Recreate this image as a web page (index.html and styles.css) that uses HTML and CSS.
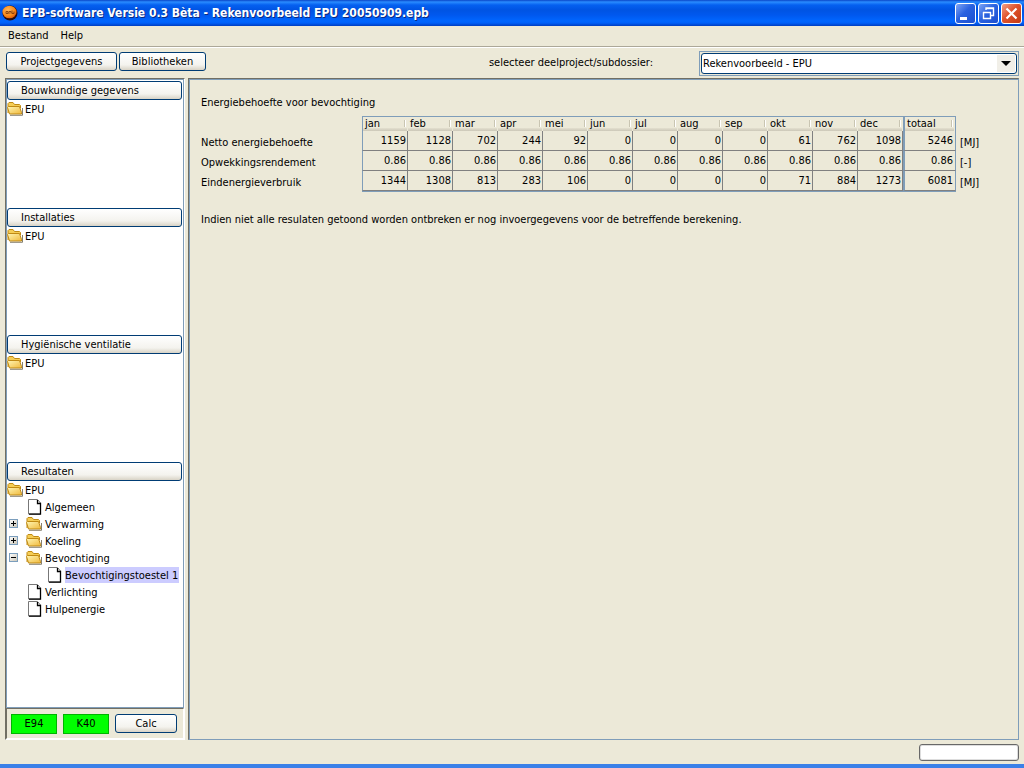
FILE: index.html
```html
<!DOCTYPE html>
<html lang="nl">
<head>
<meta charset="utf-8">
<title>EPB-software Versie 0.3 Bèta</title>
<link rel="stylesheet" href="styles.css">
</head>
<body>
<svg class="defs" aria-hidden="true">
  <defs>
    <linearGradient id="gold" x1="0" y1="0" x2="1" y2="1">
      <stop offset="0" stop-color="#fff6b4"/><stop offset="1" stop-color="#f0b93c"/>
    </linearGradient>
    <symbol id="folder" viewBox="0 0 16 14">
      <path d="M1 11V1.500L2 .5H6L7.500 2.500H12.500L13.500 3.500V6" fill="#f5cd55" stroke="#c08a14"/>
      <path d="M2.500 12L.5 5.500L1.500 4.500H12.500L14.500 10.500V12Z" fill="url(#gold)" stroke="#c08a14"/>
      <path d="M15.500 6V13.300H3" fill="none" stroke="#5e5640" stroke-opacity=".75"/>
    </symbol>
    <symbol id="page" viewBox="0 0 14 16">
      <path d="M.5 15V.5H9.500L12.500 4V15Z" fill="#fff" stroke="#777"/>
      <path d="M9.500 1V4.500H12.500V15.200H1" fill="none" stroke="#000" stroke-width="1.300"/>
    </symbol>
    <linearGradient id="boxfill" x1="0" y1="0" x2="1" y2="1">
      <stop offset="0" stop-color="#fff"/><stop offset="1" stop-color="#c9c4b5"/>
    </linearGradient>
    <symbol id="plus" viewBox="0 0 9 9">
      <rect x=".5" y=".5" width="8" height="8" fill="url(#boxfill)" stroke="#7b9ebd"/>
      <path d="M2 4.500H7M4.500 2V7" stroke="#000"/>
    </symbol>
    <symbol id="minus" viewBox="0 0 9 9">
      <rect x=".5" y=".5" width="8" height="8" fill="url(#boxfill)" stroke="#7b9ebd"/>
      <path d="M2 4.500H7" stroke="#000"/>
    </symbol>
  </defs>
</svg>

<header class="titlebar">
  <svg class="app-icon" viewBox="0 0 16 16" aria-hidden="true">
    <defs><radialGradient id="ball" cx=".4" cy=".35" r=".75"><stop offset="0" stop-color="#ffb65a"/><stop offset=".6" stop-color="#fa8a1a"/><stop offset="1" stop-color="#d84a00"/></radialGradient></defs>
    <circle cx="8" cy="8" r="7.500" fill="#2a0d10"/>
    <ellipse cx="7.500" cy="7" rx="7" ry="6.300" fill="url(#ball)"/>
    <path d="M4 6.500H6V8.500H4ZM7 9V6.500H9V8.500M10 5.500V8.500H12V6.500" fill="none" stroke="#7a3508" stroke-width=".8"/>
  </svg>
  <h1 class="title">EPB-software Versie 0.3 Bèta - Rekenvoorbeeld EPU 20050909.epb</h1>
  <button class="win" aria-label="Minimaliseren"><svg viewBox="0 0 19 19"><path d="M4 13H11V16H4Z" fill="#fff"/></svg></button>
  <button class="win" aria-label="Herstellen"><svg viewBox="0 0 19 19"><path d="M7 6V4H14.500V11.500H12M6.500 4.500H15" fill="none" stroke="#fff" stroke-width="1.400"/><path d="M4.500 8V14.500H11.500V8M4 8.500H12" fill="none" stroke="#fff" stroke-width="1.400"/></svg></button>
  <button class="win win-close" aria-label="Sluiten"><svg viewBox="0 0 19 19"><path d="M4.500 4.500L14.500 14.500M14.500 4.500L4.500 14.500" stroke="#fff" stroke-width="2.200"/></svg></button>
</header>

<nav class="menubar">
  <button class="menu">Bestand</button>
  <button class="menu">Help</button>
</nav>

<div class="toolbar">
  <button class="btn btn-project">Projectgegevens</button>
  <button class="btn btn-library">Bibliotheken</button>
  <label class="select-label" for="dossier">selecteer deelproject/subdossier:</label>
  <div class="select-frame">
    <select id="dossier" class="select"><option>Rekenvoorbeeld - EPU</option></select>
    <span class="select-arrow"><svg viewBox="0 0 10 5"><path d="M0 0H10L5 5Z"/></svg></span>
  </div>
</div>

<div class="workspace">
  <aside class="sidebar">
    <div class="sections">
      <section class="section">
        <button class="btn section-btn">Bouwkundige gegevens</button>
        <ul class="tree"><li class="node"><svg class="folder"><use href="#folder"/></svg><span class="name">EPU</span></li></ul>
      </section>
      <section class="section">
        <button class="btn section-btn">Installaties</button>
        <ul class="tree"><li class="node"><svg class="folder"><use href="#folder"/></svg><span class="name">EPU</span></li></ul>
      </section>
      <section class="section">
        <button class="btn section-btn">Hygiënische ventilatie</button>
        <ul class="tree"><li class="node"><svg class="folder"><use href="#folder"/></svg><span class="name">EPU</span></li></ul>
      </section>
      <section class="section section-last">
        <button class="btn section-btn">Resultaten</button>
        <ul class="tree">
          <li class="node"><svg class="folder"><use href="#folder"/></svg><span class="name">EPU</span></li>
          <li class="node level1"><span class="toggle"></span><svg class="page"><use href="#page"/></svg><span class="name">Algemeen</span></li>
          <li class="node level1"><span class="toggle"><svg class="box"><use href="#plus"/></svg></span><svg class="folder"><use href="#folder"/></svg><span class="name">Verwarming</span></li>
          <li class="node level1"><span class="toggle"><svg class="box"><use href="#plus"/></svg></span><svg class="folder"><use href="#folder"/></svg><span class="name">Koeling</span></li>
          <li class="node level1"><span class="toggle"><svg class="box"><use href="#minus"/></svg></span><svg class="folder"><use href="#folder"/></svg><span class="name">Bevochtiging</span></li>
          <li class="node level2"><span class="toggle"></span><svg class="page"><use href="#page"/></svg><span class="name selected">Bevochtigingstoestel 1</span></li>
          <li class="node level1"><span class="toggle"></span><svg class="page"><use href="#page"/></svg><span class="name">Verlichting</span></li>
          <li class="node level1"><span class="toggle"></span><svg class="page"><use href="#page"/></svg><span class="name">Hulpenergie</span></li>
        </ul>
      </section>
    </div>
    <div class="scores">
      <span class="score">E94</span>
      <span class="score">K40</span>
      <button class="btn calc">Calc</button>
    </div>
  </aside>

  <main class="content">
    <h2 class="heading">Energiebehoefte voor bevochtiging</h2>
    <table class="results">
      <thead>
        <tr><td class="label"></td><th class="m first"><span>jan</span></th><th class="m"><span>feb</span></th><th class="m"><span>mar</span></th><th class="m"><span>apr</span></th><th class="m"><span>mei</span></th><th class="m"><span>jun</span></th><th class="m"><span>jul</span></th><th class="m"><span>aug</span></th><th class="m"><span>sep</span></th><th class="m"><span>okt</span></th><th class="m"><span>nov</span></th><th class="m"><span>dec</span></th><th class="m total"><span>totaal</span></th><td class="unit"></td></tr>
      </thead>
      <tbody>
        <tr><th class="label">Netto energiebehoefte</th><td class="v first">1159</td><td class="v">1128</td><td class="v">702</td><td class="v">244</td><td class="v">92</td><td class="v">0</td><td class="v">0</td><td class="v">0</td><td class="v">0</td><td class="v">61</td><td class="v">762</td><td class="v">1098</td><td class="v total">5246</td><td class="unit">[MJ]</td></tr>
        <tr><th class="label">Opwekkingsrendement</th><td class="v first">0.86</td><td class="v">0.86</td><td class="v">0.86</td><td class="v">0.86</td><td class="v">0.86</td><td class="v">0.86</td><td class="v">0.86</td><td class="v">0.86</td><td class="v">0.86</td><td class="v">0.86</td><td class="v">0.86</td><td class="v">0.86</td><td class="v total">0.86</td><td class="unit">[-]</td></tr>
        <tr><th class="label">Eindenergieverbruik</th><td class="v first">1344</td><td class="v">1308</td><td class="v">813</td><td class="v">283</td><td class="v">106</td><td class="v">0</td><td class="v">0</td><td class="v">0</td><td class="v">0</td><td class="v">71</td><td class="v">884</td><td class="v">1273</td><td class="v total">6081</td><td class="unit">[MJ]</td></tr>
      </tbody>
    </table>
    <p class="note">Indien niet alle resulaten getoond worden ontbreken er nog invoergegevens voor de betreffende berekening.</p>
  </main>
</div>

<footer class="statusbar"><div class="progress"></div></footer>
</body>
</html>
```
FILE: styles.css
```css
* { box-sizing: border-box; }

body {
  margin: 0;
  min-height: 100vh;
  display: flex;
  flex-direction: column;
  background: #ece9d8;
  color: #000;
  font: 11px/14px "DejaVu Sans Condensed", "DejaVu Sans", sans-serif;
}

button, select {
  font: inherit;
  color: inherit;
  margin: 0;
  padding: 0;
}

svg { display: block; flex: none; }
.defs { position: absolute; width: 0; height: 0; }

.titlebar {
  height: 26px;
  display: flex;
  align-items: center;
  gap: 2px;
  padding: 0 2px;
  background: linear-gradient(#0a46c8 0, #2a8cff 2px, #0560f0 5px, #0054e3 10px, #0058ee 15px, #0066ff 21px, #0060f8 23px, #003dc0 26px);
}
.app-icon { width: 16px; height: 16px; }
.title {
  flex: 1;
  margin: 0;
  padding-left: 2px;
  font: bold 12px/16px "DejaVu Sans Condensed", "DejaVu Sans", sans-serif;
  color: #fff;
  text-shadow: 1px 1px 0 #0a2a80;
  white-space: nowrap;
}
.win {
  width: 21px;
  height: 21px;
  border: 1px solid #fff;
  border-radius: 3px;
  background: linear-gradient(135deg, #7fa5f5, #2a62e0 45%, #1c4fd0);
}
.win-close { background: linear-gradient(135deg, #f0a088, #e0532c 45%, #c23a14); }

.menubar {
  height: 21px;
  display: flex;
  align-items: center;
  gap: 12px;
  padding: 0 8px;
  border-bottom: 1px solid #aca899;
  box-shadow: 0 1px 0 #fff;
}
.menu { border: 0; background: none; }

.toolbar {
  height: 31px;
  display: flex;
  align-items: flex-start;
  gap: 2px;
  padding: 5px 5px 0 6px;
}
.btn {
  border: 1px solid #003c74;
  border-radius: 3px;
  padding-top: 1px;
  background: linear-gradient(#fff, #f4f3ee 70%, #d8d3c6);
}
.btn-project { width: 111px; height: 19px; }
.btn-library { width: 87px; height: 19px; }
.select-label { margin-left: auto; padding: 4px 44px 0 0; }
.select-frame {
  position: relative;
  width: 320px;
  height: 25px;
  margin-top: -1px;
  padding: 1px;
  border: 1px solid #7f9db9;
}
.select {
  appearance: none;
  width: 100%;
  height: 21px;
  padding-left: 1px;
  border: 1px solid #003c74;
  border-radius: 3px;
  background: #fff;
}
.select-arrow {
  position: absolute;
  top: 3px;
  right: 3px;
  width: 18px;
  height: 17px;
  display: grid;
  place-items: center;
  background: #f1efe8;
  pointer-events: none;
}
.select-arrow svg { width: 10px; height: 5px; }

.workspace {
  flex: 1;
  display: flex;
  gap: 3px;
  padding: 0 5px;
}
.sidebar {
  width: 180px;
  flex: none;
  display: flex;
  flex-direction: column;
  border: 1px solid #716f64;
  border-right-color: #fff;
  border-bottom-color: #fff;
}
.sections {
  flex: 1;
  padding-top: 1px;
  background: #fff;
  border: 1px solid #7f9db9;
}
.section { min-height: 127px; }
.section-last { min-height: 0; }
.section-btn {
  display: block;
  width: 175px;
  height: 19px;
  padding-left: 13px;
  text-align: left;
}
.tree { list-style: none; margin: 0; padding: 0; }
.node {
  height: 17px;
  display: flex;
  align-items: center;
  gap: 2px;
}
.level1 { gap: 3px; }
.level2 { gap: 3px; padding-left: 20px; }
.toggle { width: 16px; padding-left: 2px; }
.box { width: 9px; height: 9px; }
.folder { width: 16px; height: 14px; }
.page { width: 14px; height: 16px; margin-left: 2px; }
.name { height: 16px; padding: 1px 1px 0 0; line-height: 16px; white-space: nowrap; }
.selected { background: #ccccff; }
.scores {
  display: flex;
  align-items: center;
  gap: 6px;
  height: 31px;
  padding: 0 4px;
  border: 1px solid #716f64;
  border-right-color: #fff;
  border-bottom-color: #fff;
}
.score {
  width: 46px;
  height: 20px;
  border: 1px solid #00b400;
  background: #00ff00;
  text-align: center;
  line-height: 18px;
}
.calc { width: 62px; height: 19px; padding: 0; }

.content {
  flex: 1;
  min-width: 0;
  padding: 17px 12px;
  border: 1px solid #7f9db9;
  border-top-color: #716f64;
  border-left-color: #716f64;
  box-shadow: inset 1px 1px 0 #7f9db9;
}
.heading { margin: 0 0 6px; font-size: 11px; font-weight: normal; line-height: 14px; }

.results {
  border-collapse: separate;
  border-spacing: 0;
  table-layout: fixed;
  width: 787px;
}
.results th, .results td { padding: 0; font-weight: normal; height: 20px; line-height: 14px; }
.results .label { width: 161px; text-align: left; padding-top: 3px; }
.results .unit { width: 32px; padding: 3px 0 0 4px; }
.results .m {
  width: 45px;
  height: 15px;
  border-top: 1px solid #7f9db9;
  text-align: left;
  vertical-align: top;
}
.results .m span {
  display: block;
  height: 14px;
  margin-right: 1px;
  padding-left: 2px;
  background:
    linear-gradient(90deg, #c9c5b2 50%, #fff 50%) right 1px top 3px / 2px 7px no-repeat,
    linear-gradient(#e4e0cf, #cbc7b8) bottom / 100% 3px no-repeat;
}
.results thead td { height: 15px; padding: 0; }
.results .v {
  border-right: 1px solid #808080;
  border-bottom: 1px solid #808080;
  padding-right: 1px;
  text-align: right;
  vertical-align: middle;
}
.results .first { width: 46px; border-left: 1px solid #7f9db9; }
.results .total {
  width: 53px;
  border-left: 2px solid #7f9db9;
  border-right: 1px solid #7f9db9;
}
.results .v.total { padding-right: 2px; }
.results tbody tr:last-child .v { box-shadow: 0 1px 0 #7f9db9; }
.note { margin: 22px 0 0; }

.statusbar {
  height: 28px;
  display: flex;
  justify-content: flex-end;
  align-items: flex-start;
  padding: 4px 5px 0;
  border-bottom: 4px solid #3a80e8;
}
.progress {
  width: 100px;
  height: 17px;
  border: 1px solid #686868;
  border-radius: 3px;
  background: #fff;
  box-shadow: inset 0 0 0 1px #ddd;
}
```
